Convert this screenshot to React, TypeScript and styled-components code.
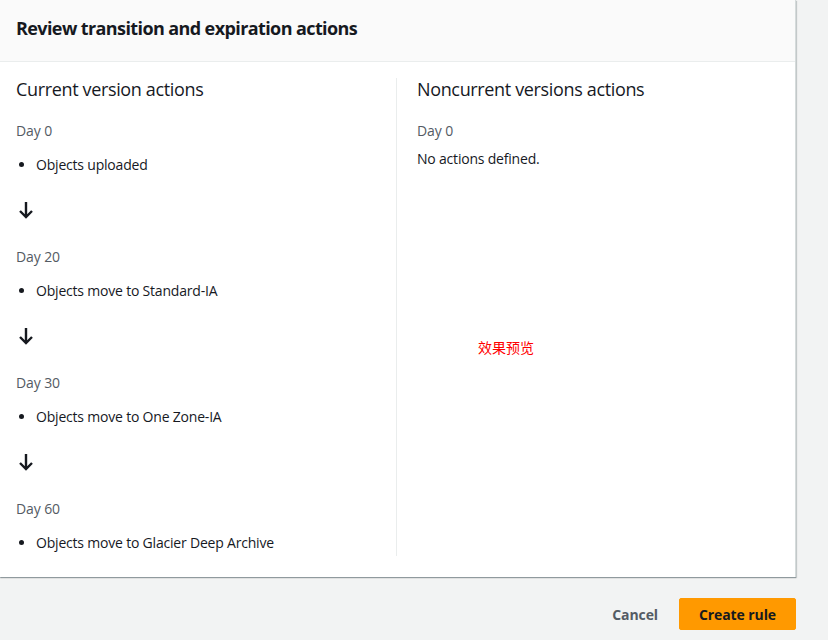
import React from "react";
import styled, { createGlobalStyle } from "styled-components";

const Global = createGlobalStyle`
  html, body { margin: 0; padding: 0; background: #f2f3f3; }
  body { font-family: "Open Sans", "Noto Sans CJK SC", sans-serif; color: #16191f; }
`;

const Page = styled.div`
  width: 828px;
  height: 640px;
  background: #f2f3f3;
  display: flex;
  flex-direction: column;
  overflow: hidden;
`;

const Card = styled.section`
  width: 795px;
  background: #fff;
  border-right: 1px solid #d5dbdb;
  box-shadow: 0 1px 1px 0 rgba(0, 28, 36, 0.3), 1px 1px 1px 0 rgba(0, 28, 36, 0.15);
  display: flex;
  flex-direction: column;
`;

const Header = styled.header`
  height: 62px;
  background: #fafafa;
  border-bottom: 1px solid #eaeded;
  display: flex;
  align-items: center;
  padding: 0 16px 6px;
  box-sizing: border-box;
`;

const Title = styled.h2`
  margin: 0;
  font-size: 18px;
  font-weight: 700;
  color: #16191f;
  line-height: 22px;
  letter-spacing: -0.6px;
`;

const Body = styled.div`
  display: grid;
  grid-template-columns: 396px 1fr;
  padding: 16px 0 21px;
`;

const Column = styled.div<{ $divider?: boolean }>`
  padding: 0 20px 0 16px;
  ${(p) => (p.$divider ? "border-left: 1px solid #eaeded; padding-left: 20px;" : "")}
  display: flex;
  flex-direction: column;
  min-height: 478px;
  box-sizing: border-box;
`;

const ColTitle = styled.h3`
  margin: 0 0 20px;
  font-size: 18px;
  font-weight: 400;
  line-height: 22px;
  color: #16191f;
  letter-spacing: -0.35px;
`;

const DayLabel = styled.div`
  font-size: 14px;
  line-height: 22px;
  color: #545b64;
  letter-spacing: -0.1px;
`;

const ItemList = styled.ul`
  margin: 12px 0 0;
  padding: 0 0 0 20px;
  list-style: disc;
  font-size: 14px;
  line-height: 22px;
  color: #16191f;
  letter-spacing: -0.2px;
`;

const Plain = styled.div`
  margin-top: 6px;
  font-size: 14px;
  line-height: 22px;
  color: #16191f;
  letter-spacing: -0.2px;
`;

const ArrowWrap = styled.div`
  margin: 25px 0 27px 2px;
  height: 18px;
  display: flex;
  align-items: center;
`;

const Preview = styled.div`
  margin: 166px 0 0 61px;
  color: #ff0000;
  font-size: 14px;
  line-height: 22px;
  font-family: "Noto Sans CJK SC", sans-serif;
`;

const Footer = styled.footer`
  display: flex;
  justify-content: flex-end;
  align-items: center;
  gap: 21px;
  width: 796px;
  padding-top: 21px;
`;

const LinkButton = styled.button`
  border: none;
  background: none;
  font-family: inherit;
  font-weight: 700;
  font-size: 14px;
  color: #545b64;
  padding: 0;
  cursor: pointer;
  letter-spacing: -0.1px;
`;

const PrimaryButton = styled.button`
  width: 117px;
  height: 32px;
  border: 1px solid #ff9900;
  border-radius: 2px;
  background: #ff9900;
  color: #16191f;
  font-family: inherit;
  font-weight: 700;
  font-size: 14px;
  cursor: pointer;
  letter-spacing: -0.1px;
`;

const Arrow = () => (
  <ArrowWrap>
    <svg width="16" height="18" viewBox="0 0 16 18" fill="none">
      <path d="M8 1v15M2 10l6 6 6-6" stroke="#16191f" strokeWidth="2.4" strokeLinecap="butt" strokeLinejoin="miter" />
    </svg>
  </ArrowWrap>
);

const steps = [
  { day: "Day 0", text: "Objects uploaded" },
  { day: "Day 20", text: "Objects move to Standard-IA" },
  { day: "Day 30", text: "Objects move to One Zone-IA" },
  { day: "Day 60", text: "Objects move to Glacier Deep Archive" },
];

export default function App() {
  return (
    <Page>
      <Global />
      <Card>
        <Header>
          <Title>Review transition and expiration actions</Title>
        </Header>
        <Body>
          <Column>
            <ColTitle>Current version actions</ColTitle>
            {steps.map((s, i) => (
              <React.Fragment key={s.day}>
                <DayLabel>{s.day}</DayLabel>
                <ItemList>
                  <li>{s.text}</li>
                </ItemList>
                {i < steps.length - 1 && <Arrow />}
              </React.Fragment>
            ))}
          </Column>
          <Column $divider>
            <ColTitle>Noncurrent versions actions</ColTitle>
            <DayLabel>Day 0</DayLabel>
            <Plain>No actions defined.</Plain>
            <Preview>效果预览</Preview>
          </Column>
        </Body>
      </Card>
      <Footer>
        <LinkButton>Cancel</LinkButton>
        <PrimaryButton>Create rule</PrimaryButton>
      </Footer>
    </Page>
  );
}
